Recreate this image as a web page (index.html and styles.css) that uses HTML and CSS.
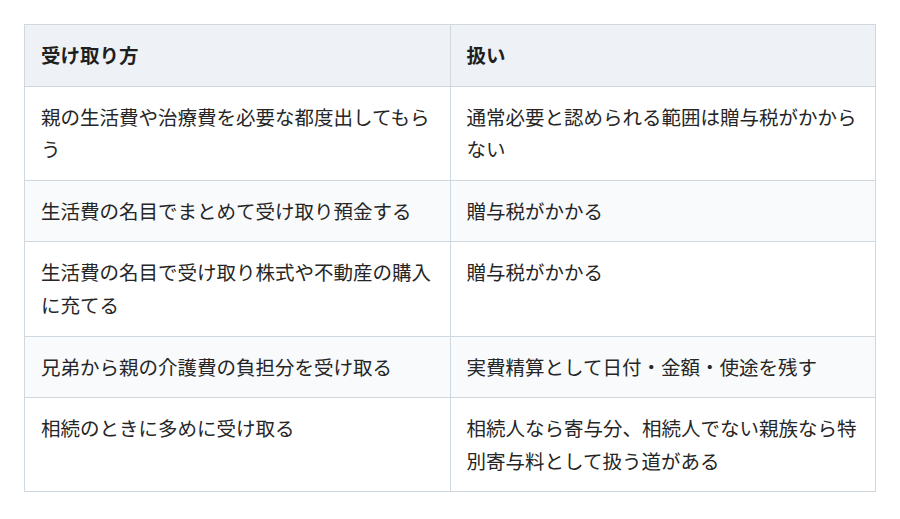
FILE: index.html
```html
<!DOCTYPE html>
<html lang="ja">
<head>
<meta charset="utf-8">
<link rel="stylesheet" href="styles.css">
</head>
<body>
<table class="tbl">
  <thead>
    <tr><th>受け取り方</th><th>扱い</th></tr>
  </thead>
  <tbody>
    <tr><td>親の生活費や治療費を必要な都度出してもらう</td><td>通常必要と認められる範囲は贈与税がかからない</td></tr>
    <tr><td>生活費の名目でまとめて受け取り預金する</td><td>贈与税がかかる</td></tr>
    <tr><td>生活費の名目で受け取り株式や不動産の購入に充てる</td><td>贈与税がかかる</td></tr>
    <tr><td>兄弟から親の介護費の負担分を受け取る</td><td>実費精算として日付・金額・使途を残す</td></tr>
    <tr><td>相続のときに多めに受け取る</td><td>相続人なら寄与分、相続人でない親族なら特別寄与料として扱う道がある</td></tr>
  </tbody>
</table>
</body>
</html>
```

FILE: styles.css
```css
html, body {
  margin: 0;
  padding: 0;
  background: #ffffff;
}
body {
  padding: 24px;
  font-family: "Noto Sans CJK JP", "Noto Sans", sans-serif;
  color: #262626;
}
.tbl {
  width: 100%;
  table-layout: fixed;
  border-collapse: collapse;
  font-size: 19.5px;
  line-height: 32.6px;
}
.tbl th,
.tbl td {
  border: 1px solid #cfd7df;
  padding: 14px 16px;
  text-align: left;
  vertical-align: top;
  font-weight: 400;
}
.tbl th {
  background: #eef2f6;
  font-weight: 700;
  color: #1f1f1f;
}
.tbl tbody tr:nth-child(even) td {
  background: #f8fafc;
}
```
